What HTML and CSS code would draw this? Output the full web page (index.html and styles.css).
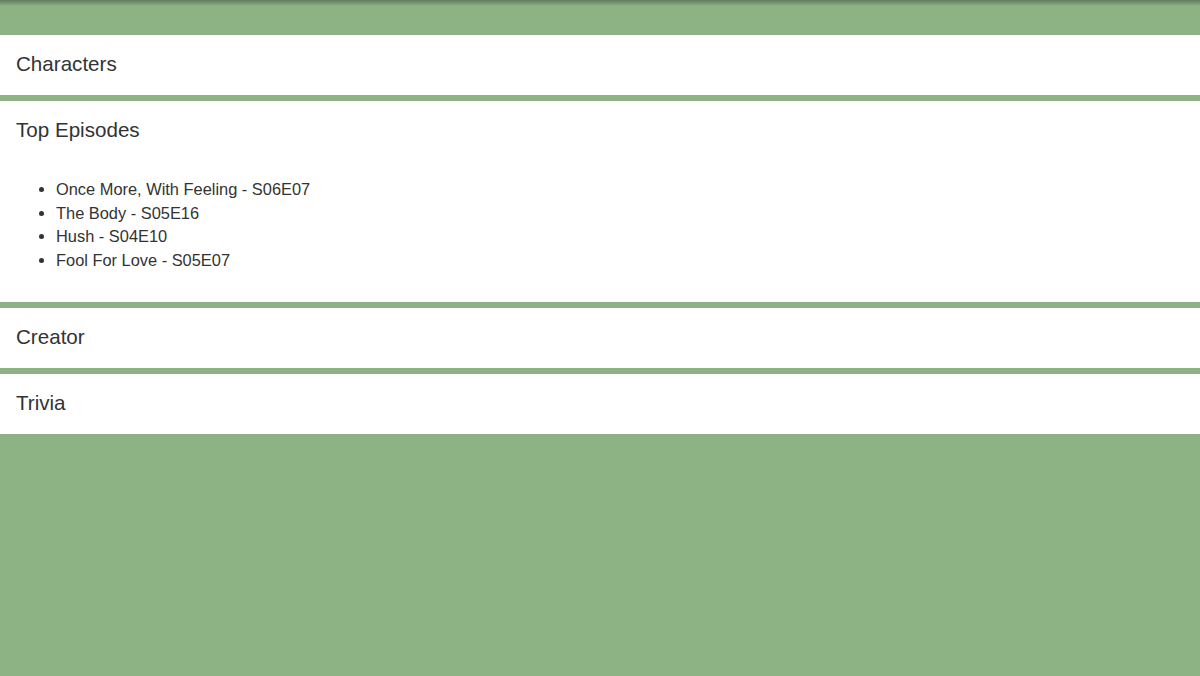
FILE: index.html
```html
<!DOCTYPE html>
<html>
<head>
<meta charset="utf-8">
<link rel="stylesheet" href="styles.css">
</head>
<body>
<div class="shade"></div>
<main class="stack">
  <section class="panel"><h2 class="panel-title">Characters</h2></section>
  <section class="panel">
    <h2 class="panel-title">Top Episodes</h2>
    <div class="panel-body">
      <ul class="episodes">
        <li>Once More, With Feeling - S06E07</li>
        <li>The Body - S05E16</li>
        <li>Hush - S04E10</li>
        <li>Fool For Love - S05E07</li>
      </ul>
    </div>
  </section>
  <section class="panel"><h2 class="panel-title">Creator</h2></section>
  <section class="panel"><h2 class="panel-title">Trivia</h2></section>
</main>
</body>
</html>
```
FILE: styles.css
```css
html, body {
  margin: 0;
  padding: 0;
  background: #8db385;
  font-family: "Liberation Sans", Arial, sans-serif;
  color: #333;
  height: 100%;
}
.shade {
  height: 6px;
  background: linear-gradient(#5f7a5a, #8db385);
}
.stack {
  display: flex;
  flex-direction: column;
  gap: 6px;
  padding-top: 29px;
}
.panel {
  background: #fff;
}
.panel-title {
  margin: 0;
  padding: 14px 16px 16px;
  font-size: 20.6px;
  font-weight: normal;
  line-height: 30px;
}
.panel-body {
  padding: 0 16px 15px;
}
.episodes {
  margin: 17px 0 15px;
  padding-left: 40px;
  font-size: 16.4px;
  line-height: 23.6px;
}
```
